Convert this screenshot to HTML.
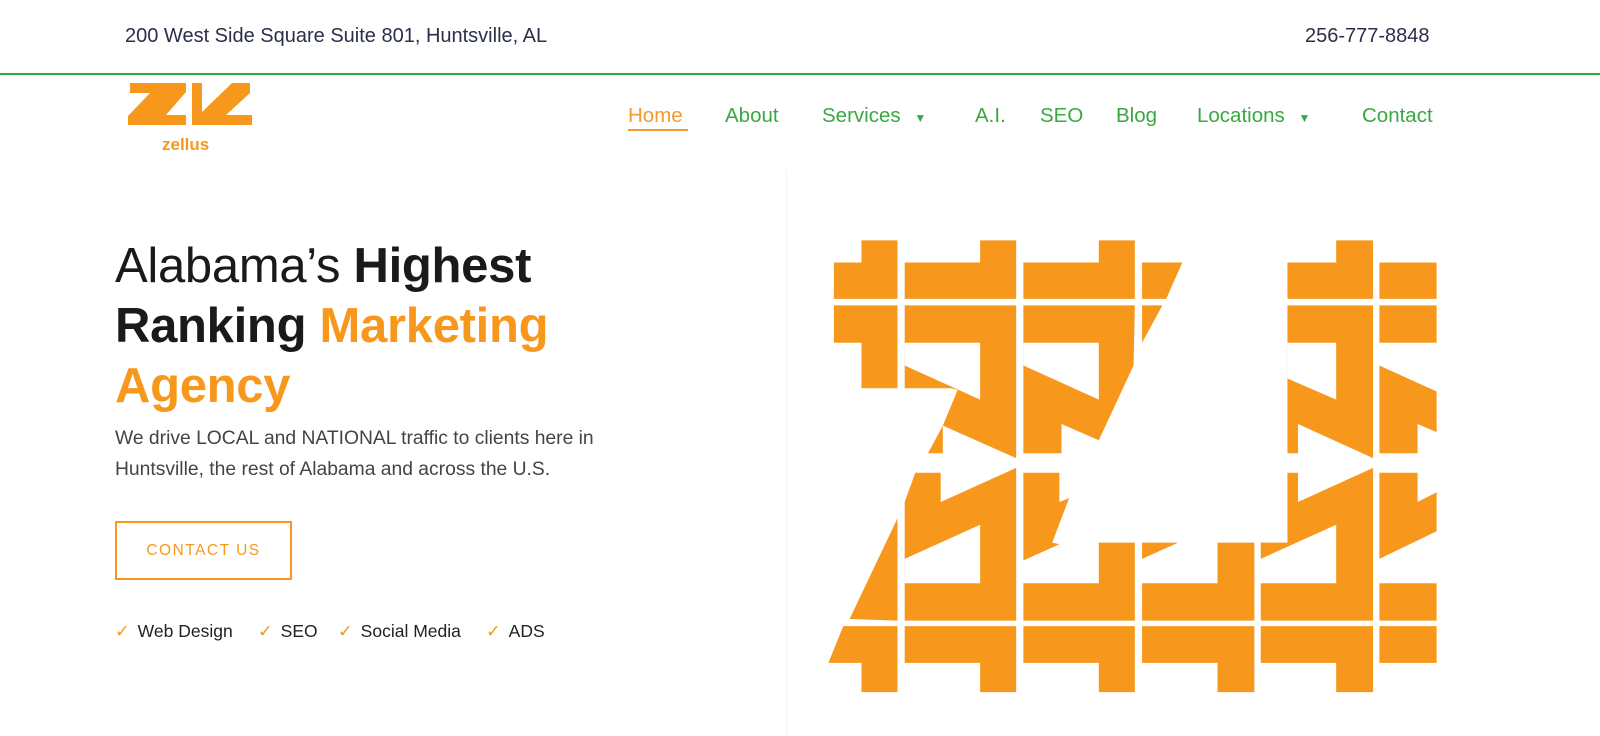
<!DOCTYPE html>
<html><head><meta charset="utf-8"><style>
*{margin:0;padding:0;box-sizing:border-box}
body{width:1600px;height:736px;background:#fff;position:relative;overflow:hidden;font-family:"Liberation Sans",sans-serif}
.a{position:absolute;white-space:nowrap}
.top{font-size:20px;color:#2b2f4a;top:25px}
.nav{top:104px;font-size:20.5px;color:#3aa842}
h1{position:absolute;left:115px;top:236px;font-size:49px;line-height:60px;font-weight:700;color:#1a1a1a;letter-spacing:-0.3px}
h1 .l{font-weight:300}
h1 .o{color:#f7981d}
p.d{position:absolute;left:115px;top:423px;font-size:19.3px;line-height:31px;color:#444}
.btn{position:absolute;left:115px;top:521px;width:177px;height:59px;border:2px solid #f7981d;color:#f7981d;font-size:15.5px;letter-spacing:1.5px;text-align:center;line-height:55px}
.chk{top:621px;font-size:17.5px;color:#222}
.chk b{color:#f7981d;font-weight:400;margin-right:8px}
</style></head><body>
<div class="a top" style="left:125px">200 West Side Square Suite 801, Huntsville, AL</div>
<div class="a top" style="left:1305px">256-777-8848</div>
<div class="a" style="left:0;top:73px;width:1600px;height:2px;background:#33a83d"></div>
<svg class="a" style="left:120px;top:80px" width="140" height="75" viewBox="120 80 140 75">
<polygon fill="#f7981d" points="130,83 186,83 186,92 166,115 186,115 186,125 128,125 128,116 150,93 130,93"/>
<polygon fill="#f7981d" points="192,83 202,83 202,112 232,83 250,83 250,93 226,115 252,115 252,125 192,125"/>
<text x="162" y="150" font-family="Liberation Sans" font-weight="700" font-size="17" fill="#f7981d">zellus</text>
</svg>
<div class="a nav" style="left:628px;color:#f39a2e">Home</div>
<div class="a" style="left:628px;top:129px;width:60px;height:2px;background:#f39a2e"></div>
<div class="a nav" style="left:725px">About</div>
<div class="a nav" style="left:822px">Services <span style="font-size:12px;margin-left:8px">▼</span></div>
<div class="a nav" style="left:975px">A.I.</div>
<div class="a nav" style="left:1040px">SEO</div>
<div class="a nav" style="left:1116px">Blog</div>
<div class="a nav" style="left:1197px">Locations <span style="font-size:12px;margin-left:8px">▼</span></div>
<div class="a nav" style="left:1362px">Contact</div>

<h1><span class="l">Alabama’s</span> Highest<br>Ranking <span class="o">Marketing<br>Agency</span></h1>
<p class="d">We drive LOCAL and NATIONAL traffic to clients here in<br>Huntsville, the rest of Alabama and across the U.S.</p>
<div class="btn">CONTACT US</div>
<div class="a chk" style="left:115px"><b>✓</b>Web Design</div>
<div class="a chk" style="left:258px"><b>✓</b>SEO</div>
<div class="a chk" style="left:338px"><b>✓</b>Social Media</div>
<div class="a chk" style="left:486px"><b>✓</b>ADS</div>
<div class="a" style="left:786px;top:170px;width:1px;height:566px;background:#f4f4f4"></div>

<svg class="a" style="left:786px;top:215.6px" width="657" height="487.5" viewBox="0 0 1550 1500" preserveAspectRatio="none">
<g fill="#f7981d">
<polygon points="113,143 178,143 178,75 263,75 263,255 113,255"/>
<polygon points="280,143 458,143 458,75 543,75 543,255 280,255"/>
<polygon points="560,143 738,143 738,75 823,75 823,255 560,255"/>
<polygon points="840,143 935,143 897,255 840,255"/>
<polygon points="1183,143 1298,143 1298,75 1385,75 1385,255 1183,255"/>
<polygon points="1400,143 1535,143 1535,255 1400,255"/>
<polygon points="113,275 263,275 263,530 178,530 178,390 113,390"/>
<polygon points="280,275 543,275 543,745 370,645 405,535 390,530 280,530"/>
<polygon points="335,730 370,645 370,730"/>
<polygon points="560,275 823,275 820,460 738,690 650,640 650,730 560,730"/>
<polygon points="840,275 888,275 840,390"/>
<polygon points="1183,275 1385,275 1385,745 1208,640 1208,730 1183,730"/>
<polygon points="1400,275 1535,275 1535,390 1400,390"/>
<polygon points="1400,460 1535,540 1535,665 1490,640 1490,730 1400,730"/>
<polygon points="305,790 365,790 365,880 543,775 543,1245 280,1245 280,880"/>
<polygon points="150,1240 263,930 263,1245"/>
<polygon points="560,790 645,790 645,880 668,868 628,1005 645,1010 560,1060"/>
<polygon points="738,1005 823,1005 823,1245 560,1245 560,1130 738,1130"/>
<polygon points="840,1005 925,1005 840,1055"/>
<polygon points="1018,1005 1105,1005 1105,1245 840,1245 840,1130 1018,1130"/>
<polygon points="1183,790 1208,790 1208,880 1385,775 1385,1245 1120,1245 1120,1130 1298,1130 1298,950 1120,1055 1120,1005 1183,1005"/>
<polygon points="1400,790 1490,790 1490,880 1535,850 1535,970 1400,1055"/>
<polygon points="1400,1130 1535,1130 1535,1245 1400,1245"/>
<polygon points="135,1262 263,1262 263,1465 178,1465 178,1375 100,1375"/>
<polygon points="280,1262 543,1262 543,1465 458,1465 458,1375 280,1375"/>
<polygon points="560,1262 823,1262 823,1465 738,1465 738,1375 560,1375"/>
<polygon points="840,1262 1105,1262 1105,1465 1018,1465 1018,1375 840,1375"/>
<polygon points="1120,1262 1385,1262 1385,1465 1298,1465 1298,1375 1120,1375"/>
<polygon points="1400,1262 1535,1262 1535,1375 1400,1375"/>
</g>
<g fill="#fff">
<polygon points="280,390 458,390 458,565 280,460"/>
<polygon points="560,390 738,390 738,565 560,460"/>
<polygon points="1183,390 1298,390 1298,565 1183,500"/>
<polygon points="280,1055 458,950 458,1130 280,1130"/>
</g>
</svg>
</body></html>
